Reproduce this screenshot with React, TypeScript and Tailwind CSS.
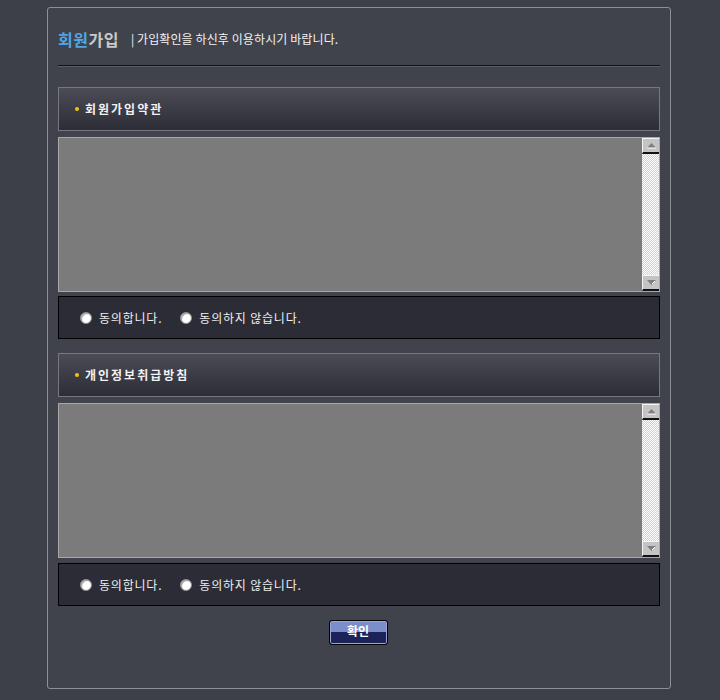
const font = { fontFamily: '"Noto Sans CJK KR", "Noto Sans", sans-serif' };

const SectionHeader = ({ title }: { title: string }) => (
  <div className="h-[44px] border border-[#77787f] bg-gradient-to-b from-[#4b4c56] to-[#2c2d36] flex items-center pl-[16px]">
    <span className="w-[4px] h-[4px] rounded-full bg-[#f5c400] mr-[6px]"></span>
    <span className="text-[12px] font-bold text-[#f2f2f2] tracking-[2px]">{title}</span>
  </div>
);

const ScrollBox = () => (
  <div className="h-[155px] border border-[#a8a8a8] bg-[#7b7b7b] flex justify-end">
    <div className="w-[17px] flex flex-col">
      <div className="h-[16px] bg-[#c4c4c4] border-t border-l border-[#f4f4f4] border-b-2 border-b-[#111] flex items-center justify-center">
        <svg width="9" height="6" viewBox="0 0 9 6">
          <path d="M4.5 0 L9 5 L0 5 Z" fill="#7e7e7e" />
          <path d="M0 5 H9" stroke="#ffffff" strokeWidth="1" />
        </svg>
      </div>
      <div className="flex-1 bg-[repeating-conic-gradient(#cfcfcf_0_25%,#ffffff_0_50%)] bg-[length:2px_2px]"></div>
      <div className="h-[16px] bg-[#c4c4c4] border-t border-l border-[#f4f4f4] border-b-2 border-b-[#111] flex items-center justify-center">
        <svg width="9" height="6" viewBox="0 0 9 6">
          <path d="M0 0 L9 0 L4.5 5 Z" fill="#7e7e7e" />
          <path d="M5 4 L8 1" stroke="#ffffff" strokeWidth="1" />
        </svg>
      </div>
    </div>
  </div>
);

const Radio = ({ label }: { label: string }) => (
  <label className="flex items-center">
    <span className="w-[12px] h-[12px] rounded-full bg-white border border-[#8a8a8a] shadow-[inset_1px_1px_1px_#9a9a9a]"></span>
    <span className="ml-[7px] text-[12px] text-[#f0f0f0] tracking-[0.8px]">{label}</span>
  </label>
);

const AgreeRow = () => (
  <div className="h-[43px] border border-black bg-[#2c2c36] flex items-center pl-[21px] gap-[18px]">
    <Radio label="동의합니다." />
    <Radio label="동의하지 않습니다." />
  </div>
);

export default function App() {
  return (
    <div className="w-[720px] h-[700px] bg-[#3e4049] pt-[7px] overflow-hidden" style={font}>
      <div className="ml-[47px] w-[624px] h-[682px] border border-[#8d8f96] rounded-[3px] bg-[#40434c] px-[10px]">
        <div className="pt-[21px] h-[57px] flex items-start">
          <div className="flex items-center h-[20px]">
            <span className="text-[16px] font-bold text-[#4ea6e3] tracking-[0.5px]">회원</span>
            <span className="text-[16px] font-bold text-[#c9c9c9] tracking-[0.5px]">가입</span>
            <span className="ml-[12px] text-[12px] text-[#f2f2f2] tracking-[0.1px]">| 가입확인을 하신후 이용하시기 바랍니다.</span>
          </div>
        </div>
        <div className="border-t border-[#111216] border-b border-b-[#5c5e66]"></div>

        <div className="mt-[20px]">
          <SectionHeader title="회원가입약관" />
        </div>
        <div className="mt-[6px]">
          <ScrollBox />
        </div>
        <div className="mt-[4px]">
          <AgreeRow />
        </div>

        <div className="mt-[14px]">
          <SectionHeader title="개인정보취급방침" />
        </div>
        <div className="mt-[6px]">
          <ScrollBox />
        </div>
        <div className="mt-[5px]">
          <AgreeRow />
        </div>

        <div className="mt-[14px] flex justify-center pr-[2px]">
          <button className="w-[59px] h-[25px] border border-black rounded-[3px] bg-[linear-gradient(#7c8ec9_0_50%,#1b2358_50%_100%)] text-white text-[12px] font-bold leading-[20px] pb-[3px] shadow-[inset_0_0_0_1px_#9aa6d8]">
            확인
          </button>
        </div>
      </div>
    </div>
  );
}
